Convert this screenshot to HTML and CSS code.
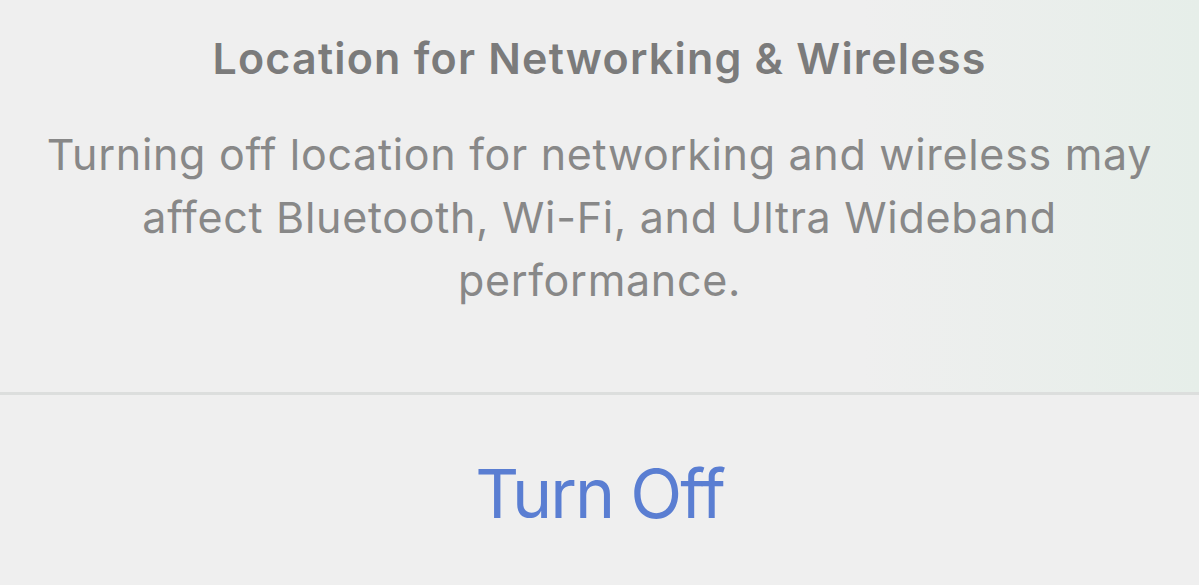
FILE: index.html
```html
<!DOCTYPE html>
<html lang="en">
<head>
  <meta charset="UTF-8" />
  <meta name="viewport" content="width=device-width, initial-scale=1.0"/>
  <title>Location for Networking &amp; Wireless</title>
  <link rel="stylesheet" href="styles.css">
</head>
<body>
  <div class="alert">
    <div class="alert-body">
      <h1 class="alert-title">Location for Networking &amp; Wireless</h1>
      <p class="alert-message">Turning off location for networking and wireless may affect Bluetooth, Wi-Fi, and Ultra Wideband performance.</p>
    </div>
    <div class="alert-actions">
      <button class="alert-btn">Turn Off</button>
    </div>
  </div>
</body>
</html>
```

FILE: styles.css
```css
/* Basic resets & layout */
html, body {
  height: 100%;
}

body {
  margin: 0;
  font-family: 'Inter', 'Liberation Sans', sans-serif;
  background: #efefef;
  overflow: hidden;
}

.alert {
  display: flex;
  flex-direction: column;
  height: 100%;
  background: linear-gradient(to right, #efefef 0%, #efefef 72%, #e6eee9 100%);
}

.alert-body {
  height: 392px;
  box-sizing: border-box;
  padding: 30px 20px 0;
  text-align: center;
}

.alert-title {
  margin: 0;
  font-size: 43px;
  font-weight: 600;
  line-height: 56px;
  letter-spacing: 1.2px;
  color: #7b7b7b;
}

.alert-message {
  margin: 37px auto 0;
  max-width: 1130px;
  font-size: 43px;
  font-weight: 400;
  line-height: 63px;
  letter-spacing: 0.7px;
  color: #888888;
}

.alert-actions {
  flex: 1;
  border-top: 3px solid #dcdedd;
  display: flex;
  align-items: flex-start;
  justify-content: center;
  background: #efefef;
}

.alert-btn {
  margin-top: 58px;
  padding: 0;
  border: none;
  background: none;
  font-family: inherit;
  font-size: 68px;
  font-weight: 400;
  line-height: 80px;
  letter-spacing: -2px;
  color: #5a7ed2;
  cursor: pointer;
}
```
